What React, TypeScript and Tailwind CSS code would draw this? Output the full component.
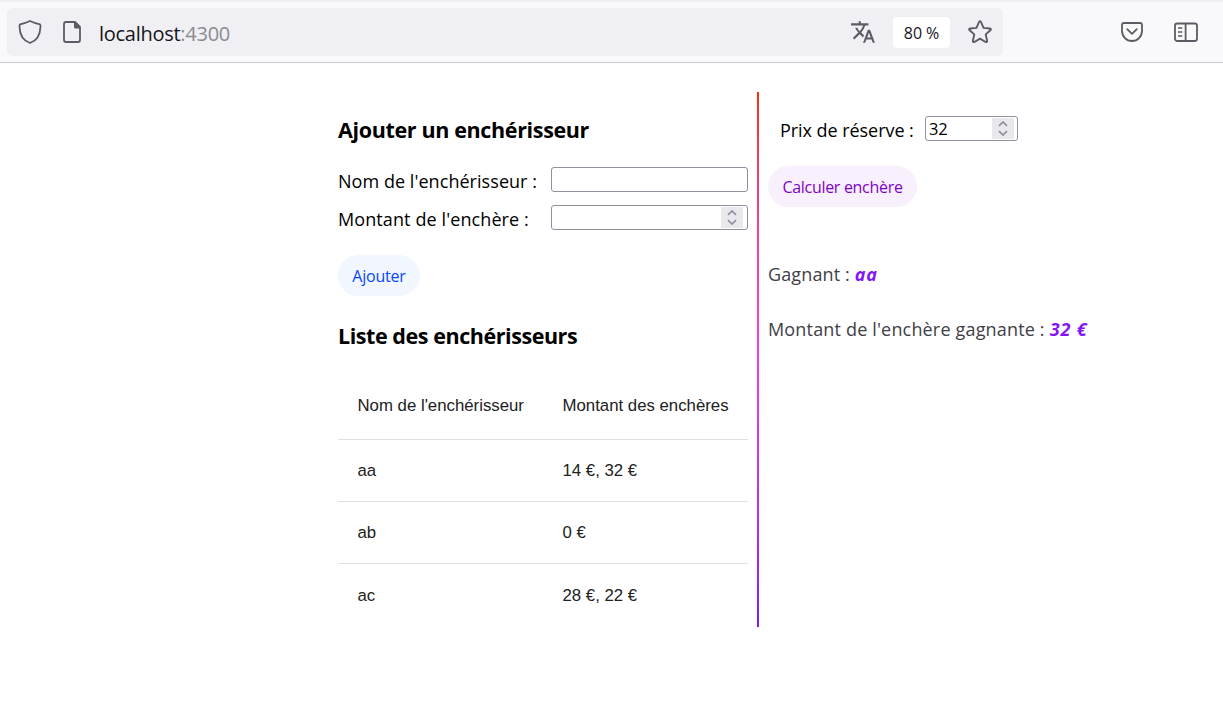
import type { ReactNode } from 'react';
import { MdTranslate } from 'react-icons/md';

const rows = [
  { name: 'aa', bids: '14 €, 32 €' },
  { name: 'ab', bids: '0 €' },
  { name: 'ac', bids: '28 €, 22 €' },
];

function Shield() {
  return (
    <svg className="h-6 w-6" viewBox="0 0 24 24" fill="none" stroke="#5b5b66" strokeWidth="1.8" strokeLinejoin="round">
      <path d="M12 1 Q17.5 3.6 22 4.4 Q22.6 5 22.5 6.5 C22.3 14 19.5 20.5 12 23 C4.5 20.5 1.7 14 1.5 6.5 Q1.4 5 2 4.4 Q6.5 3.6 12 1Z" />
    </svg>
  );
}

function PageIcon() {
  return (
    <svg className="h-[22px] w-[18px]" viewBox="0 0 18 22" fill="none" stroke="#5b5b66" strokeWidth="1.8" strokeLinejoin="round">
      <path d="M3 1 H12 L17 6 V19 Q17 21 15 21 H3 Q1 21 1 19 V3 Q1 1 3 1Z" />
      <path d="M11 1 H12 L17 6 V7.5 H12.5 Q11 7.5 11 6Z" fill="#5b5b66" stroke="none" />
    </svg>
  );
}

function Star() {
  return (
    <svg className="h-6 w-6" viewBox="0 0 24 24" fill="none" stroke="#5b5b66" strokeWidth="1.9" strokeLinejoin="round">
      <path d="M11 2 Q12 0.6 13 2 L15.5 7.9 L21.8 8.5 Q23.6 8.9 22.4 10.3 L17.7 14.4 L19.1 20.8 Q19.2 22.6 17.6 22 L12 18.6 L6.4 22 Q4.8 22.6 4.9 20.8 L6.3 14.4 L1.6 10.3 Q0.4 8.9 2.2 8.5 L8.5 7.9Z" />
    </svg>
  );
}

function Pocket() {
  return (
    <svg className="h-[20px] w-[22px]" viewBox="0 0 22 20" fill="none" stroke="#5b5b66" strokeWidth="1.8" strokeLinecap="round" strokeLinejoin="round">
      <path d="M3 1 H19 Q21 1 21 3 V9 A10 10 0 0 1 1 9 V3 Q1 1 3 1Z" />
      <path d="M6.2 7.2 L11 11.8 L15.8 7.2" />
    </svg>
  );
}

function Sidebar() {
  return (
    <svg className="h-[20px] w-6" viewBox="0 0 24 20" fill="none" stroke="#5b5b66" strokeWidth="1.8">
      <rect x="1" y="1.5" width="22" height="17.5" rx="2.2" />
      <path d="M11.6 1.5V19" />
      <path d="M4 6H8.3M4 10H8.3M4 14H8.3" strokeWidth="1.4" />
    </svg>
  );
}

function Spinner() {
  return (
    <span className="flex h-[21px] w-[22px] items-center justify-center bg-[#e9e9ed]">
      <svg className="h-[15px] w-[10px]" viewBox="0 0 10 15" fill="none" stroke="#8f8f9d" strokeWidth="1.7">
        <path d="M1 4.8 L5 1 L9 4.8 M1 10.2 L5 14 L9 10.2" />
      </svg>
    </span>
  );
}

function Field({ className, children }: { className: string; children?: ReactNode }) {
  return (
    <div className={`flex h-[25px] items-center rounded-[3px] border border-[#8f8f9d] bg-white pl-[3px] ${className}`}>
      {children}
    </div>
  );
}

export default function App() {
  return (
    <div className="h-[711px] w-[1223px] overflow-hidden bg-white font-['Open_Sans','Noto_Sans',sans-serif] whitespace-nowrap text-black">
      <header className="h-[63px] border-b border-[#cccccf] bg-[#f9f9fb]">
        <div className="h-0.5 bg-[#f0f0f4]" />
        <div className="flex pt-1.5 pl-[7px]">
          <div className="flex h-12 w-[996px] items-center rounded-md bg-[#f0f0f4] pl-[11px]">
            <Shield />
            <div className="ml-[21px]"><PageIcon /></div>
            <span className="ml-[18px] grow pt-1 text-[20px] tracking-[-0.27px] text-[#15141a]">
              localhost<span className="text-[#8a8a90]">:4300</span>
            </span>
            <MdTranslate className="mr-[17px] h-[26px] w-[26px] shrink-0 text-[#5b5b66]" />
            <span className="mr-[18px] flex h-[31px] w-[57px] shrink-0 items-center justify-center rounded bg-white pt-px text-[16px] tracking-[-0.1px] text-[#15141a]">80 %</span>
            <div className="mr-[11px] shrink-0"><Star /></div>
          </div>
          <div className="flex h-12 items-center pl-[118px]">
            <Pocket />
            <div className="ml-[31px]"><Sidebar /></div>
          </div>
        </div>
      </header>
      <main className="flex pt-[29px] pl-[338px]">
        <section className="w-[410px]">
          <h2 className="mt-[22px] h-8 text-[21.5px] leading-8 font-bold tracking-[-0.35px]">Ajouter un enchérisseur</h2>
          <div className="mt-[21px] flex h-[25px] justify-between">
            <label className="pt-0.5 text-[18px] leading-[25px] tracking-[0.05px]">Nom de l'enchérisseur :</label>
            <Field className="w-[197px]" />
          </div>
          <div className="mt-[13px] flex h-[25px] justify-between">
            <label className="pt-0.5 text-[18px] leading-[25px] tracking-[0.1px]">Montant de l'enchère :</label>
            <Field className="w-[197px] justify-end pr-1"><Spinner /></Field>
          </div>
          <button className="mt-[25px] flex h-[41px] w-[82px] items-center justify-center rounded-full bg-[#f2f6ff] text-[16px] tracking-[-0.2px] text-[oklch(51.01%_0.274_263.83)]">Ajouter</button>
          <h2 className="mt-6 h-8 text-[21.5px] leading-8 font-bold tracking-[-0.44px]">Liste des enchérisseurs</h2>
          <table className="mt-[19px] w-[410px] border-collapse text-left font-['Liberation_Sans',Arial,sans-serif] text-[16.8px] text-[#212121]">
            <thead>
              <tr className="h-[68px]">
                <th className="w-[205px] pt-px pl-[19.5px] font-normal">Nom de l'enchérisseur</th>
                <th className="w-[205px] pt-px pl-[19.5px] font-normal">Montant des enchères</th>
              </tr>
            </thead>
            <tbody>
              {rows.map((row) => (
                <tr key={row.name} className="h-[62px] border-t border-[#e0e0e0]">
                  <td className="pt-0.5 pl-[19.5px]">{row.name}</td>
                  <td className="pt-0.5 pl-[19.5px]">{row.bids}</td>
                </tr>
              ))}
            </tbody>
          </table>
        </section>
        <div className="ml-[9px] h-[535px] w-0.5 bg-[linear-gradient(180deg,oklch(63.32%_0.24_31.68)_0%,oklch(69.02%_0.277_332.77)_50%,oklch(53.18%_0.28_296.97)_100%)]" />
        <section className="pl-[9px] text-[18px]">
          <div className="mt-6 flex h-[25px] pl-3">
            <label className="w-[145px] pt-0.5 leading-[25px] tracking-[-0.05px]">Prix de réserve :</label>
            <Field className="w-[93px] justify-between pr-[3px]">
              <span className="pt-0.5 text-[16.5px] tracking-[-0.2px]">32</span>
              <Spinner />
            </Field>
          </div>
          <button className="mt-[25px] flex h-[41px] w-[149px] items-center justify-center rounded-full bg-[#f8f1fd] text-[16px] tracking-[-0.3px] text-[oklch(47.66%_0.246_305.88)]">Calculer enchère</button>
          <p className="mt-[52px] leading-[30px] tracking-[0.12px] text-[oklch(36.98%_0.014_302.71)]">
            Gagnant : <b className="tracking-[0.9px] text-[oklch(53.18%_0.28_296.97)] italic">aa</b>
          </p>
          <p className="mt-[25px] leading-[30px] tracking-[0.17px] text-[oklch(36.98%_0.014_302.71)]">
            Montant de l'enchère gagnante : <b className="tracking-[0.9px] text-[oklch(53.18%_0.28_296.97)] italic">32 €</b>
          </p>
        </section>
      </main>
    </div>
  );
}
